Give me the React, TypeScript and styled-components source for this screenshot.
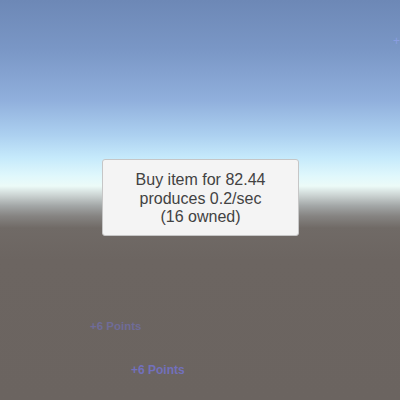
import React from "react";
import styled, { createGlobalStyle } from "styled-components";

const Global = createGlobalStyle`
  html, body { margin: 0; padding: 0; }
  body { font-family: "Liberation Sans", Arial, sans-serif; }
`;

const Scene = styled.div`
  position: relative;
  width: 400px;
  height: 400px;
  overflow: hidden;
  box-sizing: border-box;
  padding-top: 159px;
  display: flex;
  justify-content: center;
  background: linear-gradient(
    to bottom,
    #6d88b6 0px,
    #7a97c6 50px,
    #90afdc 100px,
    #acd0f0 135px,
    #c6eafb 158px,
    #e0f8fc 176px,
    #ecfbf8 186px,
    #c9d1d0 196px,
    #a2a6a6 206px,
    #868482 216px,
    #706a66 228px,
    #6c6561 260px,
    #6b6460 400px
  );
`;

const TooltipBox = styled.div`
  width: 197px;
  height: 77px;
  box-sizing: border-box;
  margin-left: 1px;
  background: #f4f4f4;
  border: 1px solid #c6c6c6;
  border-radius: 3px;
  display: flex;
  flex-direction: column;
  align-items: center;
  justify-content: center;
  color: #424242;
  font-size: 16px;
  line-height: 18.5px;
  text-align: center;
  padding-top: 3px;
`;

const FloatText = styled.div<{ $x: number; $y: number; $size: number; $color: string; $bold?: boolean }>`
  position: absolute;
  left: ${(p) => p.$x}px;
  top: ${(p) => p.$y}px;
  font-size: ${(p) => p.$size}px;
  font-weight: ${(p) => (p.$bold ? "bold" : "normal")};
  color: ${(p) => p.$color};
  white-space: nowrap;
  line-height: 1;
`;

export default function App() {
  return (
    <>
      <Global />
      <Scene>
        <TooltipBox>
          <div>Buy item for 82.44</div>
          <div>produces 0.2/sec</div>
          <div>(16 owned)</div>
        </TooltipBox>
        <FloatText $x={90} $y={321} $size={11.5} $color="#6f6c98" $bold>
          +6 Points
        </FloatText>
        <FloatText $x={131} $y={364} $size={12} $color="#7270bc" $bold>
          +6 Points
        </FloatText>
        <FloatText $x={393} $y={35} $size={12} $color="#8a9ee0">
          +
        </FloatText>
      </Scene>
    </>
  );
}
